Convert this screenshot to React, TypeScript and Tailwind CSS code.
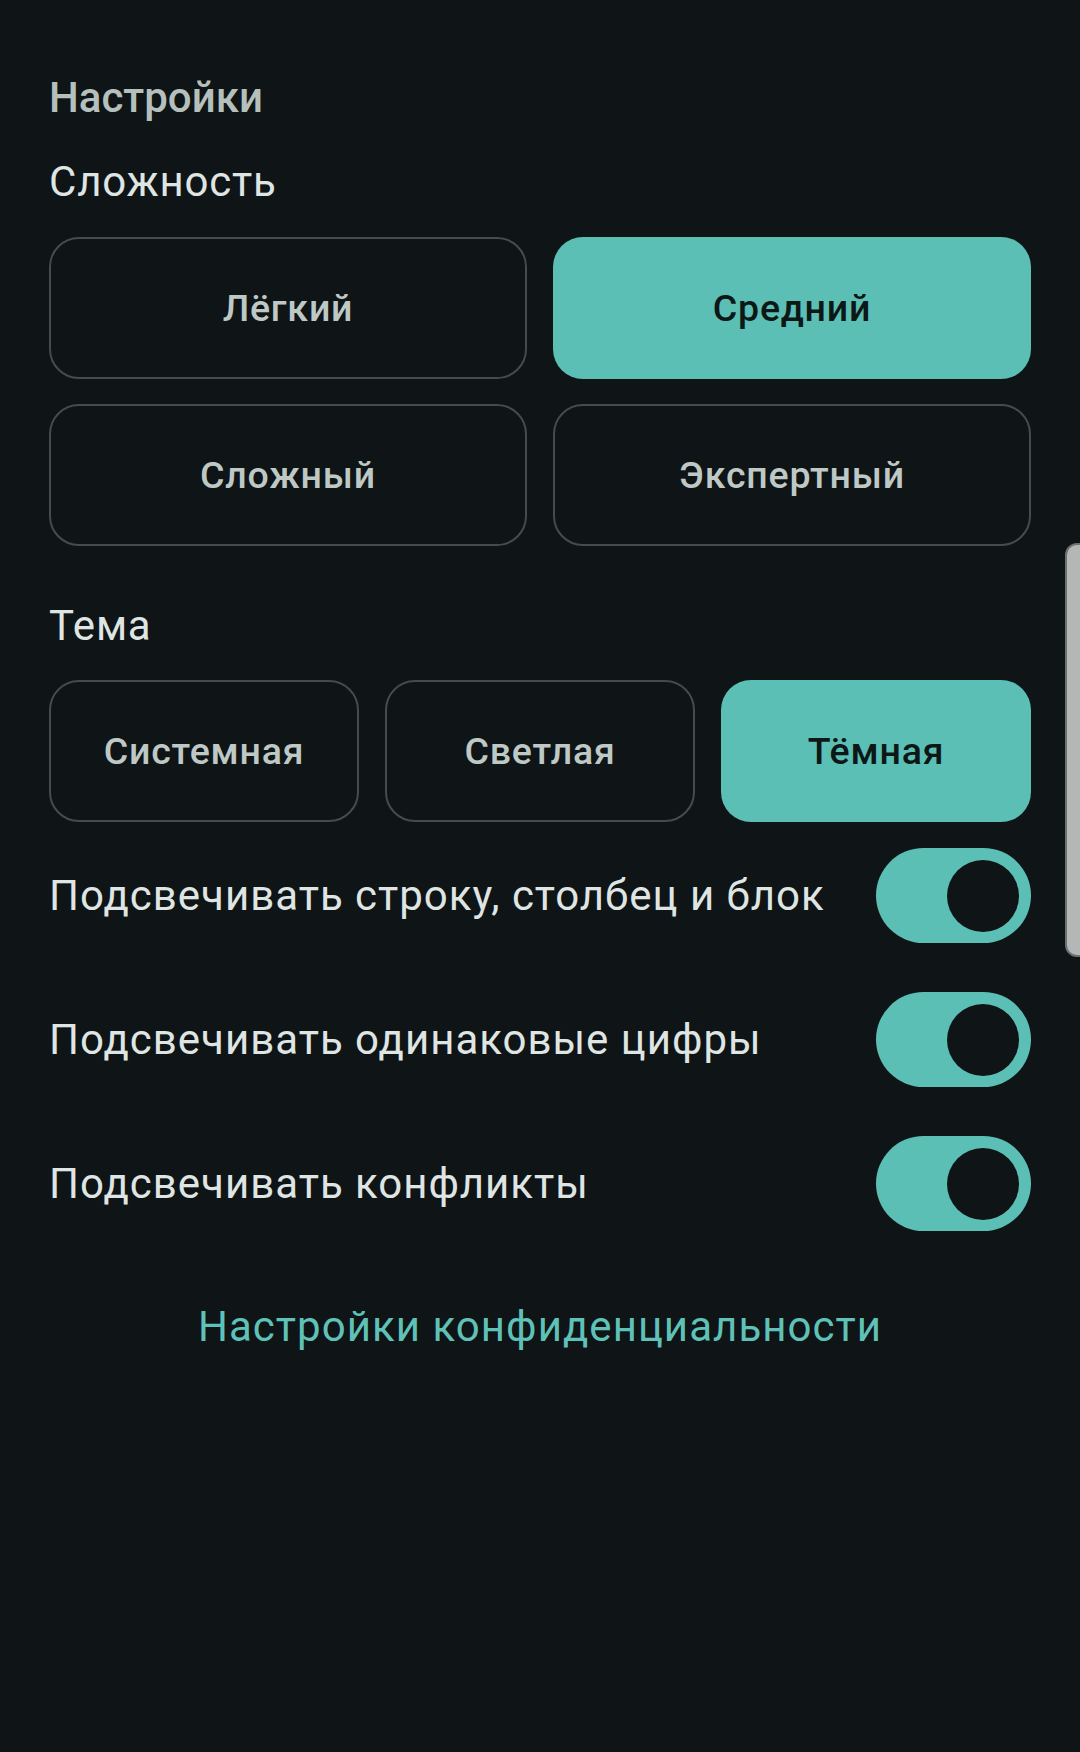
import React, { useState } from "react";

const font = { fontFamily: "Roboto, 'Noto Sans', sans-serif" };

type OptionProps = { label: string; active: boolean; onClick: () => void };

function OptionButton({ label, active, onClick }: OptionProps) {
  return (
    <button
      onClick={onClick}
      className={
        active
          ? "h-[142px] rounded-[30px] bg-[#5bbfb5] text-[#0c1716] text-[37.5px] font-medium tracking-[0.8px] flex items-center justify-center"
          : "h-[142px] rounded-[30px] border-2 border-[#464c4d] text-[#bec8c5] text-[37.5px] font-medium tracking-[0.8px] flex items-center justify-center"
      }
    >
      {label}
    </button>
  );
}

function Toggle({ on, onClick }: { on: boolean; onClick: () => void }) {
  return (
    <button
      onClick={onClick}
      className={
        on
          ? "w-[155px] h-[95px] shrink-0 rounded-full bg-[#5bbfb5] flex items-center justify-end pr-[12px]"
          : "w-[155px] h-[95px] shrink-0 rounded-full bg-[#2a3132] flex items-center justify-start pl-[12px]"
      }
    >
      <span className="block w-[72px] h-[72px] rounded-full bg-[#0f1416]" />
    </button>
  );
}

export default function App() {
  const [level, setLevel] = useState("Средний");
  const [theme, setTheme] = useState("Тёмная");
  const [flags, setFlags] = useState([true, true, true]);

  const levels = ["Лёгкий", "Средний", "Сложный", "Экспертный"];
  const themes = ["Системная", "Светлая", "Тёмная"];
  const toggles = [
    "Подсвечивать строку, столбец и блок",
    "Подсвечивать одинаковые цифры",
    "Подсвечивать конфликты",
  ];

  return (
    <div className="relative min-h-[1752px] w-full bg-[#0f1416] overflow-hidden" style={font}>
      <div className="flex flex-col px-[49px] pt-[70px]">
        <h1 className="text-[42px] leading-[56px] font-medium text-[#b5c0bd]">
          Настройки
        </h1>

        <h2 className="mt-[28px] text-[42px] leading-[56px] text-[#dfe5e3] tracking-[0.8px]">
          Сложность
        </h2>
        <div className="mt-[27px] grid grid-cols-2 gap-x-[26px] gap-y-[25px]">
          {levels.map((l) => (
            <OptionButton key={l} label={l} active={level === l} onClick={() => setLevel(l)} />
          ))}
        </div>

        <h2 className="mt-[52px] text-[42px] leading-[56px] text-[#dfe5e3] tracking-[0.8px]">
          Тема
        </h2>
        <div className="mt-[26px] grid grid-cols-3 gap-[26px]">
          {themes.map((t) => (
            <OptionButton key={t} label={t} active={theme === t} onClick={() => setTheme(t)} />
          ))}
        </div>

        <div className="mt-[26px] flex flex-col gap-[49px]">
          {toggles.map((t, i) => (
            <div key={t} className="flex items-center justify-between">
              <span className="text-[42px] leading-[56px] text-[#dfe5e3] tracking-[1px]">{t}</span>
              <Toggle
                on={flags[i]}
                onClick={() => setFlags(flags.map((f, j) => (j === i ? !f : f)))}
              />
            </div>
          ))}
        </div>

        <a className="mt-[68px] self-center text-[42px] leading-[56px] text-[#5fc2b8] tracking-[1.05px]">
          Настройки конфиденциальности
        </a>
      </div>

      {/* scroll thumb on the right edge */}
      <div className="absolute right-[-12px] top-[543px] h-[414px] w-[27px] rounded-[12px] bg-[#b5b7b6] border-2 border-[#6c7070]" />
    </div>
  );
}
